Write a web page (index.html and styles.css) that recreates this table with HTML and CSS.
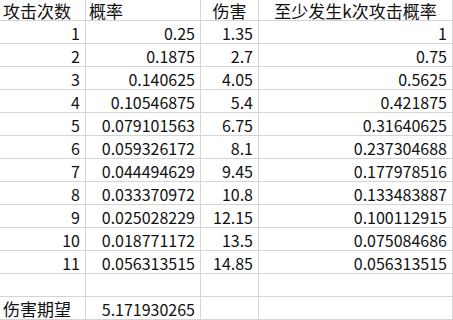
FILE: index.html
```html
<!DOCTYPE html>
<html lang="zh">
<head>
<meta charset="utf-8">
<link rel="stylesheet" href="styles.css">
</head>
<body>
<div class="sheet">
  <div class="c txt head">攻击次数</div><div class="c txt head">概率</div><div class="c txt mid head">伤害</div><div class="c txt mid head">至少发生k次攻击概率</div>
  <div class="c num">1</div><div class="c num">0.25</div><div class="c num">1.35</div><div class="c num">1</div>
  <div class="c num">2</div><div class="c num">0.1875</div><div class="c num">2.7</div><div class="c num">0.75</div>
  <div class="c num">3</div><div class="c num">0.140625</div><div class="c num">4.05</div><div class="c num">0.5625</div>
  <div class="c num">4</div><div class="c num">0.10546875</div><div class="c num">5.4</div><div class="c num">0.421875</div>
  <div class="c num">5</div><div class="c num">0.079101563</div><div class="c num">6.75</div><div class="c num">0.31640625</div>
  <div class="c num">6</div><div class="c num">0.059326172</div><div class="c num">8.1</div><div class="c num">0.237304688</div>
  <div class="c num">7</div><div class="c num">0.044494629</div><div class="c num">9.45</div><div class="c num">0.177978516</div>
  <div class="c num">8</div><div class="c num">0.033370972</div><div class="c num">10.8</div><div class="c num">0.133483887</div>
  <div class="c num">9</div><div class="c num">0.025028229</div><div class="c num">12.15</div><div class="c num">0.100112915</div>
  <div class="c num">10</div><div class="c num">0.018771172</div><div class="c num">13.5</div><div class="c num">0.075084686</div>
  <div class="c num">11</div><div class="c num">0.056313515</div><div class="c num">14.85</div><div class="c num">0.056313515</div>
  <div class="c"></div><div class="c"></div><div class="c"></div><div class="c"></div>
  <div class="c txt">伤害期望</div><div class="c num">5.171930265</div><div class="c"></div><div class="c"></div>
</div>
</body>
</html>
```
FILE: styles.css
```css
html, body {
  margin: 0;
  padding: 0;
  background: #ffffff;
}
.sheet {
  display: grid;
  grid-template-columns: 86px 115px 58px 194px;
  grid-template-rows: 21px repeat(13, 23px);
  width: 453px;
  font-family: "Noto Sans CJK SC", "Noto Sans", sans-serif;
  color: #111;
}
.c {
  box-sizing: border-box;
  border-right: 1px solid #d4d4d4;
  border-bottom: 1px solid #d4d4d4;
  display: flex;
  align-items: center;
  white-space: nowrap;
  padding-top: 2px;
  line-height: 18px;
}
.head {
  padding-top: 1px;
}
.txt {
  font-size: 17px;
  justify-content: flex-start;
  padding-left: 3px;
}
.mid {
  justify-content: center;
  padding-left: 0;
}
.num {
  font-size: 16px;
  justify-content: flex-end;
  padding-right: 5px;
}
```
